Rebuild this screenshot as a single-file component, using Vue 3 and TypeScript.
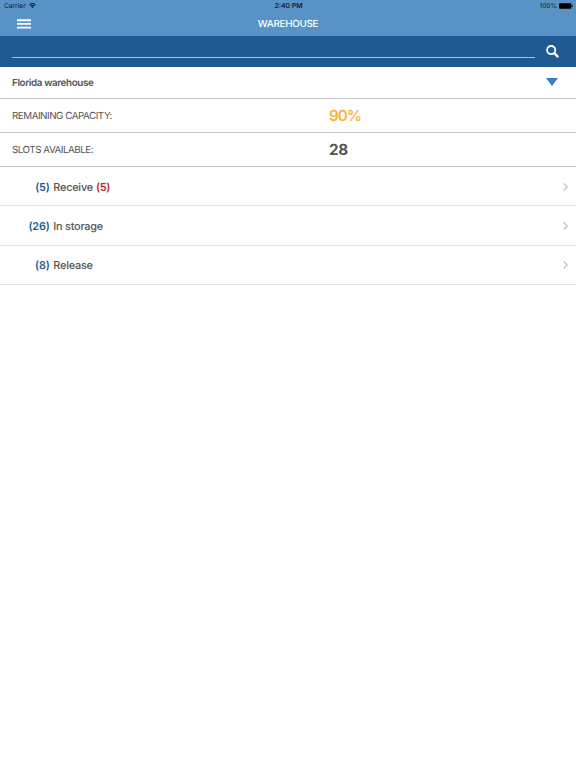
<script setup lang="ts">
interface Section {
  count: number
  label: string
  alert?: number
}

const sections: Section[] = [
  { count: 5, label: 'Receive', alert: 5 },
  { count: 26, label: 'In storage' },
  { count: 8, label: 'Release' },
]
</script>

<template>
  <div class="screen">
    <header class="top">
      <div class="status">
        <div class="carrier">
          <span>Carrier</span>
          <svg class="wifi" viewBox="0 0 16 12" aria-hidden="true">
            <path d="M1 4.2C5 .4 11 .4 15 4.2M3.6 7C6.2 4.7 9.8 4.7 12.4 7" fill="none" stroke="#10202c" stroke-width="2.4" />
            <path d="M5.4 8.7C7 7.5 9 7.5 10.6 8.7L8 11.6Z" fill="#10202c" />
          </svg>
        </div>
        <span class="time">2:40 PM</span>
        <div class="power">
          <span>100%</span>
          <svg class="battery" viewBox="0 0 14 6" aria-hidden="true">
            <rect x="0" y="0.2" width="12.4" height="5.6" rx="0.8" />
            <rect x="12.8" y="2" width="1" height="2" rx="0.5" />
          </svg>
        </div>
      </div>
      <div class="nav">
        <button class="menu" aria-label="Menu">
          <svg viewBox="0 0 14 10" aria-hidden="true">
            <path d="M0 1.2H14M0 4.9H14M0 8.6H14" fill="none" stroke="#fff" stroke-width="1.9" />
          </svg>
        </button>
        <h1>WAREHOUSE</h1>
        <span />
      </div>
    </header>

    <div class="search">
      <input type="text" aria-label="Search" />
      <svg class="glass" viewBox="0 0 13 13" aria-hidden="true">
        <circle cx="5.2" cy="5.1" r="4.1" fill="none" stroke="#fff" stroke-width="1.8" />
        <path d="M8.3 8.2L11.5 11.4" stroke="#fff" stroke-width="2.4" stroke-linecap="round" />
      </svg>
    </div>

    <div class="row picker">
      <span class="name">Florida warehouse</span>
      <svg class="arrow" viewBox="0 0 12 9" aria-hidden="true"><path d="M0 0H12L6 8Z" fill="#397fb9" /></svg>
    </div>
    <div class="row stat">
      <span class="capacity">REMAINING CAPACITY:</span>
      <strong class="percent">90%</strong>
    </div>
    <div class="row stat">
      <span class="slots">SLOTS AVAILABLE:</span>
      <strong>28</strong>
    </div>

    <div v-for="s in sections" :key="s.label" class="item">
      <span class="count">({{ s.count }})</span>
      <span class="label">{{ s.label }}</span>
      <span v-if="s.alert" class="alert">({{ s.alert }})</span>
      <svg class="chevron" viewBox="0 0 5 8" aria-hidden="true">
        <path d="M.7 .5L4.2 4L.7 7.5" fill="none" stroke="#bdbdc0" stroke-width="1.1" />
      </svg>
    </div>
  </div>
</template>

<style>
body {
  margin: 0;
  background: #fff;
}
</style>

<style scoped>
.screen {
  min-height: 768px;
  background: #fff;
  color: #545456;
  font-family: Inter, 'Liberation Sans', sans-serif;
  text-rendering: geometricPrecision;
}
.top {
  height: 36px;
  background: #5893c6;
}
.status {
  display: grid;
  grid-template-columns: 1fr auto 1fr;
  align-items: center;
  height: 12px;
  padding: 0 3px 0 4px;
  color: #10202c;
  font-size: 6.6px;
  line-height: 12px;
}
.carrier,
.power {
  display: flex;
  align-items: center;
}
.carrier {
  gap: 3px;
}
.power {
  justify-content: flex-end;
  gap: 2px;
}
.wifi {
  width: 7px;
  height: 5.5px;
}
.battery {
  width: 14px;
  height: 6px;
  fill: #000;
}
.time {
  font-weight: 600;
  font-size: 6.9px;
  line-height: 12px;
}
.nav {
  display: grid;
  grid-template-columns: 1fr auto 1fr;
  align-items: center;
  height: 23px;
  padding: 0 17px;
}
.menu {
  width: 14px;
  padding: 0;
  border: 0;
  background: none;
}
.menu svg {
  display: block;
  width: 14px;
  height: 10px;
}
h1 {
  margin: 0;
  padding-top: 1px;
  color: #fff;
  font-size: 9.8px;
  font-weight: 500;
  letter-spacing: -0.25px;
  line-height: 23px;
}
.search {
  display: flex;
  align-items: center;
  box-sizing: border-box;
  height: 31px;
  padding: 0 17px 0 12px;
  background: #1f5b92;
}
.search input {
  flex: 1;
  align-self: flex-start;
  min-width: 0;
  height: 22px;
  box-sizing: border-box;
  padding: 0;
  border: 0;
  border-bottom: 1px solid #a5c0d8;
  outline: 0;
  background: none;
  color: #fff;
}
.glass {
  width: 13px;
  height: 13px;
  margin-left: 11px;
}
.row {
  display: flex;
  align-items: center;
  box-sizing: border-box;
  height: 34px;
  padding: 0 12px;
  border-bottom: 1px solid #c6c6c8;
  font-size: 9.8px;
}
.picker {
  justify-content: space-between;
  height: 32px;
  padding-right: 18px;
}
.name {
  padding-top: 2px;
  font-weight: 600;
  letter-spacing: -0.36px;
}
.arrow {
  width: 12px;
  height: 9px;
}
.stat span {
  width: 317px;
  padding-top: 2px;
  letter-spacing: -0.47px;
}
.stat strong {
  font-size: 15.2px;
  font-weight: 700;
  letter-spacing: -0.3px;
}
.stat .percent {
  color: #f8b140;
  font-weight: 600;
  letter-spacing: -1px;
}
.item {
  display: flex;
  align-items: center;
  box-sizing: border-box;
  height: 39.4px;
  padding-right: 8.5px;
  border-bottom: 1px solid #e4e4e6;
  font-size: 10.9px;
  font-weight: 500;
  letter-spacing: -0.23px;
}
.item:nth-of-type(5) {
  padding-top: 1px;
}
.count {
  width: 49.5px;
  text-align: right;
  color: #1f5b92;
  font-weight: 600;
}
.label {
  margin-left: 3.8px;
}
.alert {
  margin-left: 3px;
  color: #b92c2f;
  font-weight: 600;
}
.chevron {
  width: 5px;
  height: 8px;
  margin-left: auto;
}
</style>
